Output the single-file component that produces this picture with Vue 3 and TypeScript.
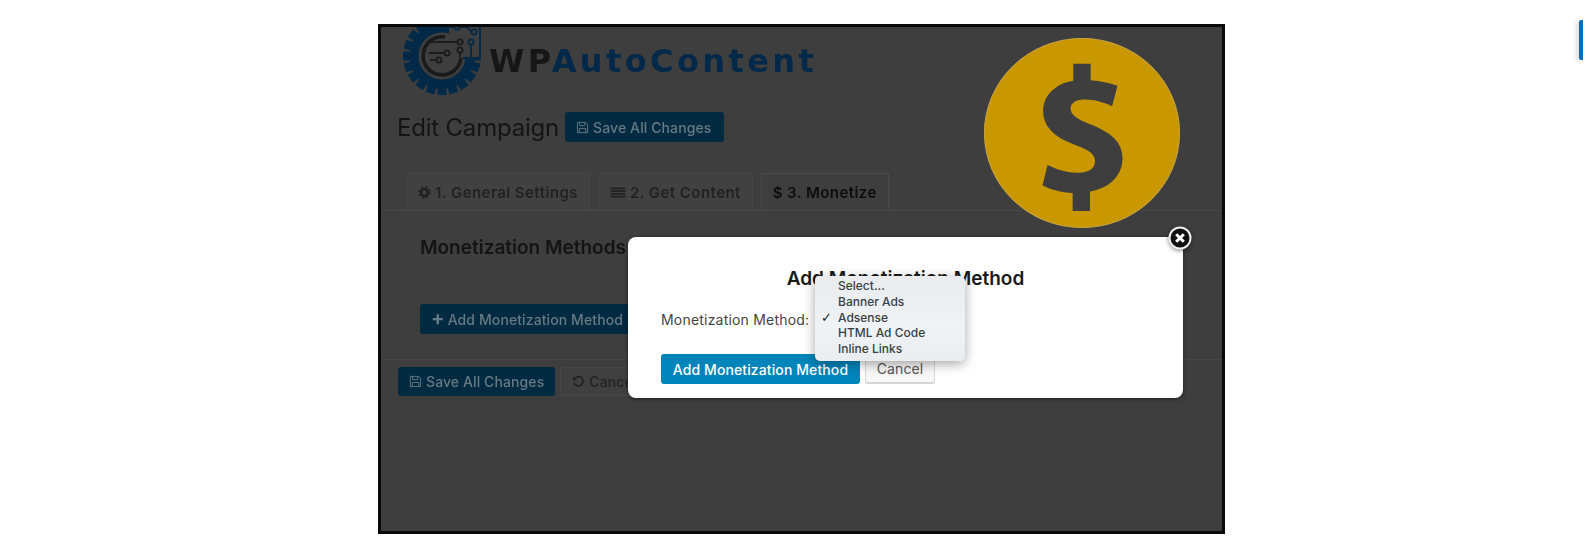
<script setup lang="ts">
interface Tab {
  label: string;
  icon: 'gear' | 'list' | 'dollar';
  active?: boolean;
}

const tabs: Tab[] = [
  { label: '1. General Settings', icon: 'gear' },
  { label: '2. Get Content', icon: 'list' },
  { label: '3. Monetize', icon: 'dollar', active: true },
];

const options = ['Select...', 'Banner Ads', 'Adsense', 'HTML Ad Code', 'Inline Links'];
const selected = 'Adsense';

// teeth of the logo gear, the top right is left open for the circuit lines
const teeth = Array.from({ length: 20 }, (_, i) => i * 18).filter((a) => a < 36 || a > 72);
</script>

<template>
  <div class="page">
    <div class="frame">
      <div class="dim">
        <div class="logo">
          <svg class="gear" viewBox="0 0 90 90" width="90" height="90">
            <g fill="#022a48">
              <rect v-for="a in teeth" :key="a" x="40.5" y="6" width="9" height="10" :transform="`rotate(${a} 45 45)`" />
            </g>
            <circle cx="45" cy="45" r="28" fill="none" stroke="#022a48" stroke-width="9" />
            <path d="M52 0H90V47H70L52 25Z" fill="#3e3e3e" />
            <path d="M48 26 A 19 19 0 1 0 64 47" fill="none" stroke="#1a1a1a" stroke-width="3.6" />
            <g fill="none" stroke="#1a1a1a" stroke-width="1.8">
              <path d="M32 31 H60.5" />
              <path d="M32 42 H47.5" />
              <path d="M33 49 H39.5" />
              <circle cx="63" cy="31" r="2.6" />
              <circle cx="50" cy="42" r="2.6" />
              <circle cx="63" cy="39" r="2.6" />
              <circle cx="42" cy="49" r="2.6" />
              <path d="M63 41.5V46" />
            </g>
            <g fill="none" stroke="#022a48" stroke-width="1.8">
              <path d="M52 16 H57.5 M62.5 16 H70 L74.5 21 M83 4 V47 H66" />
              <circle cx="60" cy="16" r="2.6" />
              <circle cx="77" cy="21" r="2.6" />
              <circle cx="74" cy="31" r="2.6" />
              <path d="M74 33.6 V47" />
            </g>
          </svg>
          <span class="wordmark"><span class="wp">WP</span><span class="brand">AutoContent</span></span>
        </div>

        <div class="title-row">
          <h1>Edit Campaign</h1>
          <button class="btn primary save-top">
            <svg class="icon" viewBox="0 0 14 14"><path d="M1.5 1.5H10.5L12.5 3.5V12.5H1.5Z M4 1.5V5H9.5V1.5 M3.5 12.5V8H10.5V12.5" fill="none" stroke="currentColor" stroke-width="1" /></svg>
            Save All Changes
          </button>
        </div>

        <div class="tabs">
          <div v-for="t in tabs" :key="t.label" class="tab" :class="{ active: t.active }">
            <svg v-if="t.icon === 'gear'" class="icon" viewBox="0 0 14 14">
              <circle cx="7" cy="7" r="3.6" fill="none" stroke="currentColor" stroke-width="2.6" />
              <circle cx="7" cy="7" r="5.7" fill="none" stroke="currentColor" stroke-width="2" stroke-dasharray="2.4 2.07" />
            </svg>
            <svg v-else-if="t.icon === 'list'" class="icon list" viewBox="0 0 16 14">
              <path d="M0 2.5H16M0 5.5H16M0 8.5H16M0 11.5H16" stroke="currentColor" stroke-width="2" />
            </svg>
            <span v-else class="dollar">$</span>
            {{ t.label }}
          </div>
        </div>

        <div class="section">
          <h2>Monetization Methods</h2>
          <button class="btn primary add">
            <span class="plus">+</span>
            Add Monetization Method
          </button>
        </div>

        <div class="footer">
          <button class="btn primary">
            <svg class="icon" viewBox="0 0 14 14"><path d="M1.5 1.5H10.5L12.5 3.5V12.5H1.5Z M4 1.5V5H9.5V1.5 M3.5 12.5V8H10.5V12.5" fill="none" stroke="currentColor" stroke-width="1" /></svg>
            Save All Changes
          </button>
          <button class="btn ghost">
            <svg class="icon" viewBox="0 0 14 14"><path d="M3 3.5A5 5 0 1 1 2.2 8.5" fill="none" stroke="currentColor" stroke-width="1.8" /><path d="M1 1.5V6H5.5Z" fill="currentColor" /></svg>
            Cancel
          </button>
        </div>
      </div>

      <svg class="coin" viewBox="73 55 586 568" width="196" height="190" preserveAspectRatio="none">
        <ellipse cx="366" cy="339" rx="292" ry="283" fill="#c99700" stroke="#dcbc5c" stroke-width="2" />
        <path fill="#3e3e3e" d="M340 132H392V181C420 183 448 189 472 198L456 259C430 247 400 238 372 239C345 240 332 250 332 266C332 285 350 297 390 313C455 338 487 368 487 415C487 465 450 503 390 514V572H338V518C305 517 270 508 248 495L263 435C290 449 325 459 357 458C388 457 405 445 405 423C405 402 388 390 350 376C290 354 250 325 250 273C250 228 285 192 340 183Z" />
      </svg>

      <div class="modal">
        <h3>Add Monetization Method</h3>
        <div class="field">Monetization Method:</div>
        <div class="actions">
          <button class="modal-btn submit">Add Monetization Method</button>
          <button class="modal-btn cancel">Cancel</button>
        </div>

        <ul class="menu">
          <li v-for="o in options" :key="o">
            <span class="check">{{ o === selected ? '✓' : '' }}</span>{{ o }}
          </li>
        </ul>

        <div class="close">
          <svg viewBox="0 0 24 24" width="24" height="24">
            <circle cx="12" cy="12" r="10.5" fill="#111" stroke="#eee" stroke-width="2" />
            <path d="M8.2 8.2L15.8 15.8M15.8 8.2L8.2 15.8" stroke="#fff" stroke-width="3" />
          </svg>
        </div>
      </div>
    </div>

    <div class="edge-tab"></div>
  </div>
</template>

<style>
html,
body {
  margin: 0;
  background: #fff;
}
</style>

<style scoped>
.page {
  position: relative;
  width: 1585px;
  height: 556px;
  overflow: hidden;
  padding: 24px 0 0 378px;
  box-sizing: border-box;
  font-family: Inter, "Liberation Sans", sans-serif;
}

.frame {
  position: relative;
  width: 847px;
  height: 510px;
  box-sizing: border-box;
  border: 3px solid #0a0a0a;
  background: #3e3e3e;
  overflow: hidden;
}

.dim {
  filter: blur(0.5px);
}

.logo {
  height: 85px;
  display: flex;
  align-items: flex-start;
  padding-left: 16px;
}

.gear {
  margin-top: -16px;
  flex: none;
}

.wordmark {
  margin: 17px 0 0 2px;
  font-family: "DejaVu Sans", sans-serif;
  font-weight: 700;
  font-size: 32px;
  line-height: 34px;
  letter-spacing: 3.4px;
  white-space: nowrap;
}

.wp {
  color: #161616;
}

.brand {
  color: #02294a;
}

.title-row {
  display: flex;
  align-items: center;
  gap: 6px;
  padding-left: 16px;
  height: 30px;
}

h1 {
  margin: 0;
  font-size: 24px;
  font-weight: 400;
  color: #141414;
  letter-spacing: -0.2px;
}

.btn {
  height: 29px;
  box-sizing: border-box;
  border: 0;
  border-radius: 3px;
  padding: 0 11px;
  display: inline-flex;
  align-items: center;
  gap: 4px;
  font-family: inherit;
  font-size: 14px;
  font-weight: 500;
  letter-spacing: 0.1px;
  white-space: nowrap;
}

.primary {
  background: #022a40;
  color: #667a85;
}

.save-top {
  height: 30px;
  width: 159px;
}

.ghost {
  color: #222;
  background: #404040;
  border: 1px solid #484848;
  width: 120px;
}

.icon {
  width: 13px;
  height: 13px;
  flex: none;
}

.icon.list {
  width: 16px;
}

.tabs {
  display: flex;
  gap: 8px;
  margin-top: 31px;
  padding-left: 25px;
  height: 37px;
  border-bottom: 1px solid #474747;
}

.tab {
  display: flex;
  align-items: center;
  gap: 4px;
  padding: 0 11px;
  box-sizing: border-box;
  height: 37px;
  background: #414141;
  border: 1px solid #454545;
  border-bottom: 0;
  font-size: 15px;
  font-weight: 600;
  letter-spacing: 0.45px;
  color: #222;
  white-space: nowrap;
}

.tab.active {
  color: #0c0c0c;
  background: #3e3e3e;
  border-color: #494949;
}

.dollar {
  font-weight: 600;
}

.section {
  padding: 25px 0 0 39px;
  height: 149px;
  box-sizing: border-box;
  border-bottom: 1px solid #474747;
}

h2 {
  margin: 0 0 44px;
  font-size: 19px;
  line-height: 24px;
  font-weight: 600;
  color: #141414;
}

.add {
  width: 240px;
  height: 30px;
  padding: 0 11px;
  gap: 3px;
}

.plus {
  font-size: 20px;
  font-weight: 700;
  line-height: 20px;
  margin-top: -2px;
}

.footer {
  display: flex;
  gap: 5px;
  margin-top: 7px;
  padding-left: 17px;
}

.coin {
  position: absolute;
  left: 603px;
  top: 11px;
}

.modal {
  position: absolute;
  left: 247px;
  top: 210px;
  width: 555px;
  height: 161px;
  box-sizing: border-box;
  padding: 31px 33px 0;
  background: #fff;
  border-radius: 8px;
  box-shadow: 0 1px 4px rgba(0, 0, 0, 0.5);
  color: #222;
}

h3 {
  margin: 0;
  text-align: center;
  font-size: 19px;
  line-height: 22px;
  font-weight: 600;
  color: #1a1a1a;
}

.field {
  margin-top: 20px;
  font-size: 14px;
  line-height: 20px;
  letter-spacing: 0.2px;
  color: #444;
}

.actions {
  display: flex;
  gap: 5px;
  margin-top: 24px;
}

.modal-btn {
  height: 30px;
  box-sizing: border-box;
  border-radius: 3px;
  font-family: inherit;
  font-size: 14px;
  letter-spacing: 0.1px;
  padding: 0;
}

.submit {
  width: 199px;
  border: 0;
  background: #0085ba;
  color: #fff;
  font-weight: 500;
}

.cancel {
  width: 70px;
  border: 1px solid #d5d5d5;
  border-bottom-width: 2px;
  background: #f7f7f7;
  color: #555;
}

.menu {
  position: absolute;
  left: 187px;
  top: 39px;
  width: 150px;
  margin: 0;
  padding: 2px 0;
  box-sizing: border-box;
  height: 85px;
  list-style: none;
  background: linear-gradient(#e9ebed, #eff3f6 60%, #e9edf0);
  border-radius: 5px;
  box-shadow: 0 3px 12px rgba(0, 0, 0, 0.35);
  font-size: 12px;
  line-height: 15.8px;
  font-weight: 500;
  color: #3a3f44;
}

.menu li {
  display: flex;
  white-space: nowrap;
}

.check {
  width: 23px;
  text-align: right;
  padding-right: 6px;
  box-sizing: border-box;
  font-family: "DejaVu Sans", sans-serif;
  font-size: 13px;
  font-weight: 700;
  color: #222;
}

.close {
  position: absolute;
  right: -9px;
  top: -11px;
  width: 24px;
  height: 24px;
  filter: drop-shadow(0 1px 2px rgba(0, 0, 0, 0.5));
}

.close svg {
  display: block;
}

.edge-tab {
  position: absolute;
  right: 2px;
  top: 20px;
  width: 4px;
  height: 40px;
  background: #0071b8;
  border-radius: 2px 0 0 2px;
  box-shadow: -2px 1px 5px rgba(0, 0, 0, 0.2);
}
</style>
